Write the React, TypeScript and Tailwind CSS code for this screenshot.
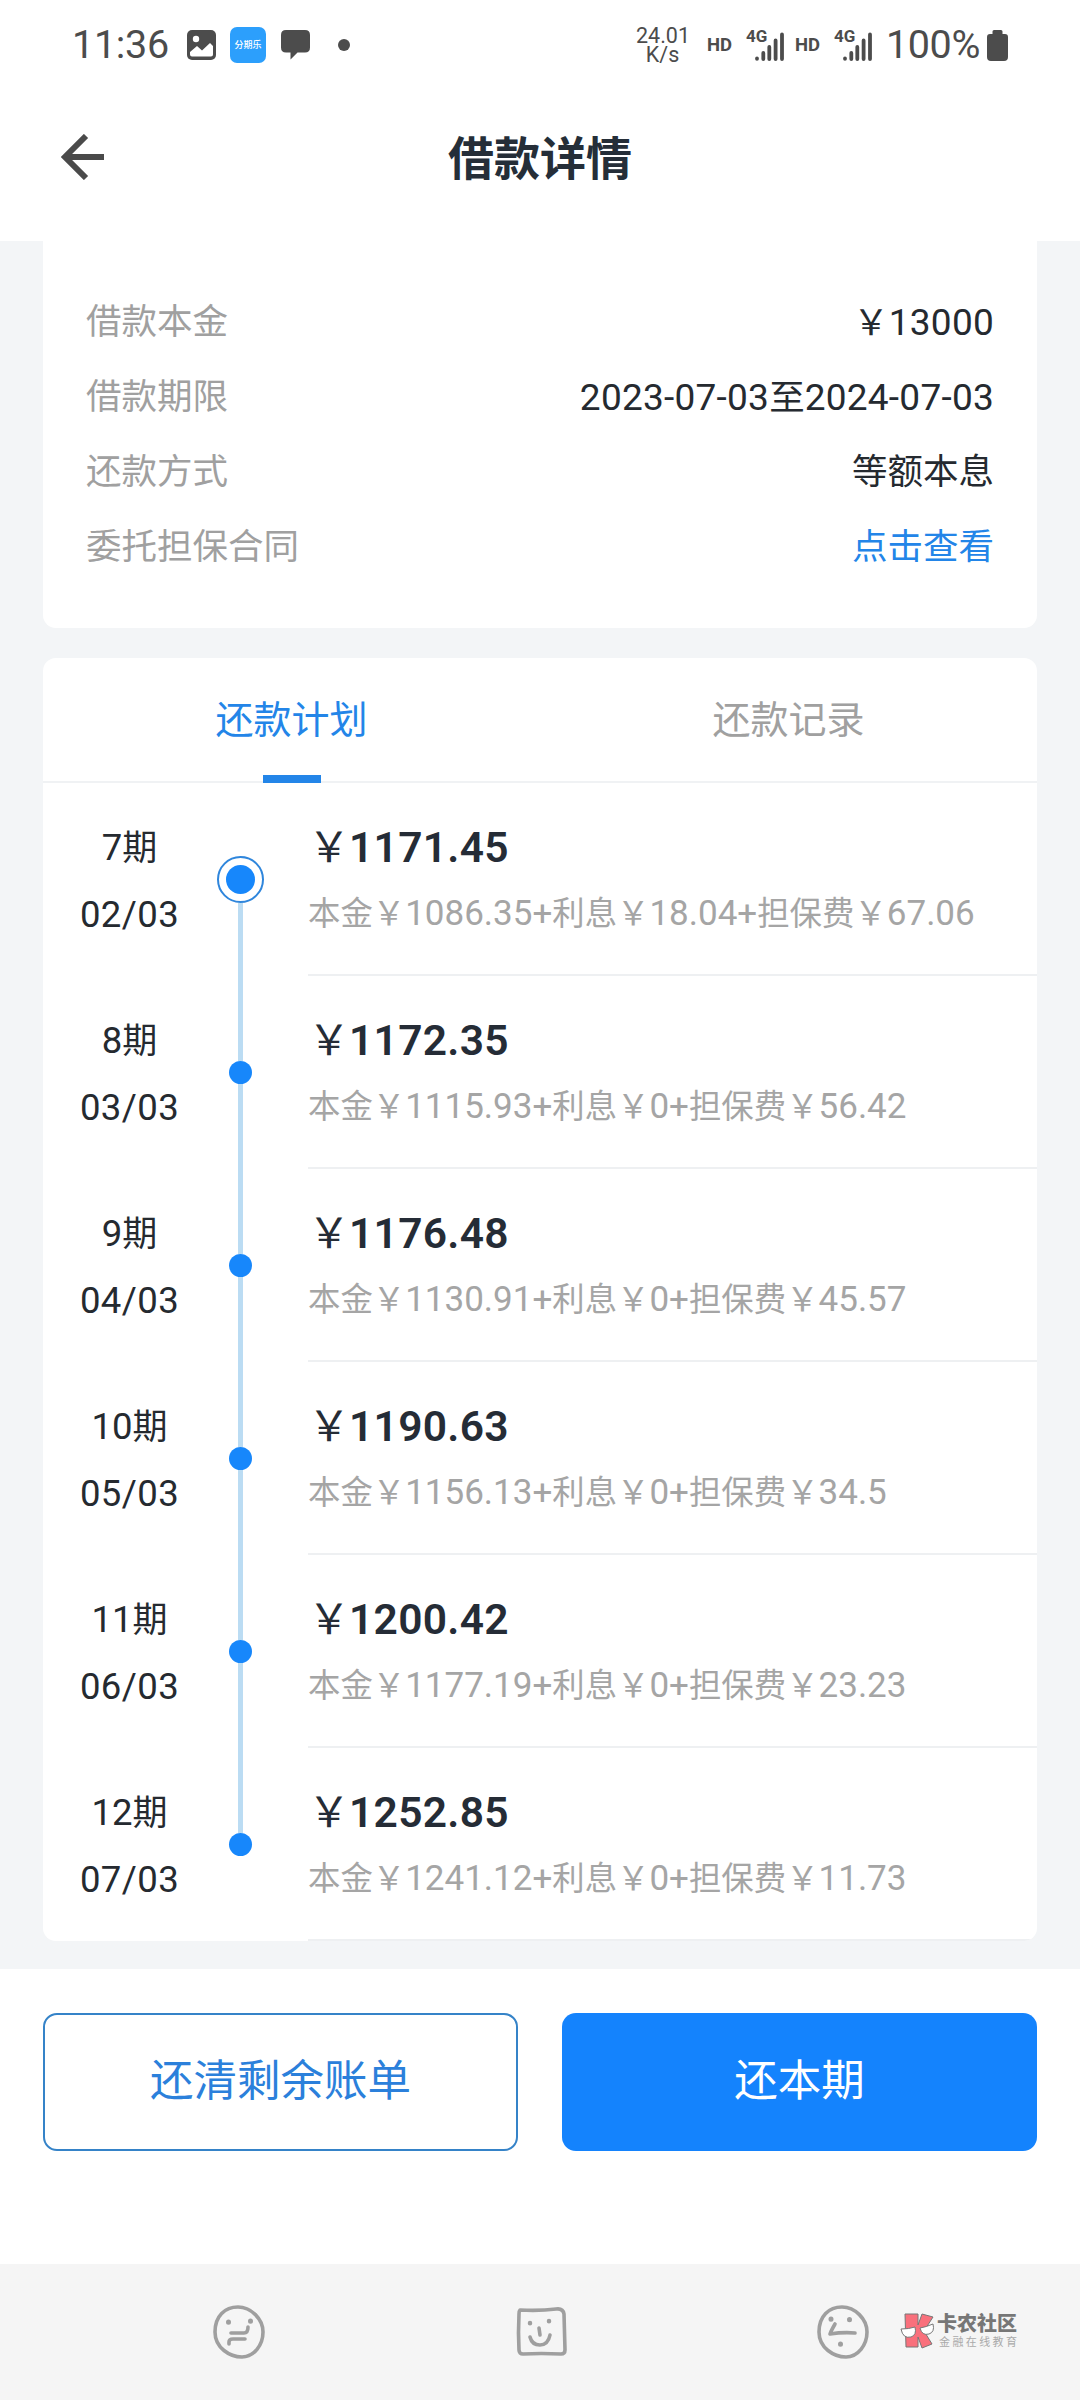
const details = [
  { label: "借款本金", value: "￥13000" },
  { label: "借款期限", value: "2023-07-03至2024-07-03" },
  { label: "还款方式", value: "等额本息" },
  { label: "委托担保合同", value: "点击查看", link: true },
];

const plan = [
  { period: "7期", date: "02/03", amount: "1171.45", parts: "本金￥1086.35+利息￥18.04+担保费￥67.06" },
  { period: "8期", date: "03/03", amount: "1172.35", parts: "本金￥1115.93+利息￥0+担保费￥56.42" },
  { period: "9期", date: "04/03", amount: "1176.48", parts: "本金￥1130.91+利息￥0+担保费￥45.57" },
  { period: "10期", date: "05/03", amount: "1190.63", parts: "本金￥1156.13+利息￥0+担保费￥34.5" },
  { period: "11期", date: "06/03", amount: "1200.42", parts: "本金￥1177.19+利息￥0+担保费￥23.23" },
  { period: "12期", date: "07/03", amount: "1252.85", parts: "本金￥1241.12+利息￥0+担保费￥11.73" },
];

// Digits are set slightly larger than the Chinese characters around them
function Mixed({ text, latin }: { text: string; latin: string }) {
  return (
    <>
      {text.split(/([0-9.+\-/]+)/).map((part, i) =>
        i % 2 ? <span key={i} className={latin}>{part}</span> : part
      )}
    </>
  );
}

function Signal() {
  return (
    <div className="relative h-[31px] w-[38px]">
      <span className="absolute top-0 left-0 text-[17px] leading-[12px] font-bold">4G</span>
      <svg className="absolute right-0 bottom-0" width="29" height="29" viewBox="0 0 29 29" fill="none" stroke="currentColor" strokeWidth="3.8" strokeLinecap="round">
        <path d="M2 26.5v.3M8.3 21v6M14.3 15v12M20.6 8.5V27M27 2.500V27" />
      </svg>
    </div>
  );
}

function StatusBar() {
  return (
    <div className="flex h-[90px] items-center justify-between pr-[72px] pl-[72px] text-[#4c4c4c]">
      <div className="flex items-center">
        <span className="w-[99px] text-[39.5px] leading-none tracking-[-0.3px]">11:36</span>
        <svg className="ml-[16px]" width="29" height="30" viewBox="0 0 29 30">
          <rect width="29" height="30" rx="5" fill="currentColor" />
          <circle cx="9" cy="9" r="3.2" fill="#fff" />
          <path d="M3 22l7-6 5 4.500 8-7.500 3 3v8.500q0 2-2 2H5q-2 0-2-2z" fill="#fff" />
        </svg>
        <div className="ml-[14px] flex h-9 w-9 items-center justify-center rounded-[7px] bg-[#2c9ffc] text-[9px] leading-none font-medium whitespace-nowrap text-white">分期乐</div>
        <svg className="ml-[15px]" width="29" height="30" viewBox="0 0 29 30" fill="currentColor">
          <path d="M5 0h19q5 0 5 5v12.500q0 5-5 5h-7.500L9.500 29.500v-7H5q-5 0-5-5V5q0-5 5-5z" />
        </svg>
        <span className="ml-[28px] h-3 w-3 rounded-full bg-[#4c4c4c]" />
      </div>
      <div className="flex items-center">
        <div className="mr-[18px] w-[53px] text-center text-[21.500px] leading-[19px]">
          <div>24.01</div>
          <div>K/s</div>
        </div>
        <span className="w-[27px] text-[18.500px] leading-none font-bold">HD</span>
        <div className="ml-[12px]"><Signal /></div>
        <span className="ml-[11px] w-[27px] text-[18.500px] leading-none font-bold">HD</span>
        <div className="ml-[12px]"><Signal /></div>
        <span className="ml-[14px] w-[96px] text-[39.500px] leading-none tracking-[-0.4px]">100%</span>
        <svg className="ml-[5px]" width="21" height="31" viewBox="0 0 21 31" fill="currentColor">
          <path d="M7 0h7q1.500 0 1.500 1.500V4H18q3 0 3 3v20q0 4-4 4H4q-4 0-4-4V7q0-3 3-3h2.500V1.500Q5.500 0 7 0z" />
        </svg>
      </div>
    </div>
  );
}

function Header() {
  return (
    <div className="grid h-[151px] grid-cols-3 items-start pt-[42px]">
      <svg className="mt-[2px] ml-[60px]" width="46" height="46" viewBox="0 0 46 46" fill="none" stroke="#4a4a4a" strokeWidth="6">
        <path d="M26 2L5 23l21 21M5 23h39" />
      </svg>
      <h1 className="text-center text-[46px] leading-[54px] font-bold text-[#252e38]">借款详情</h1>
    </div>
  );
}

function PlanRow({ item, index }: { item: (typeof plan)[number]; index: number }) {
  const first = index === 0;
  const last = index === plan.length - 1;
  return (
    <div className="flex h-[193px]">
      <div className="flex w-[173px] flex-col items-center pt-[38px] text-[35px] text-[#252a30]">
        <div className="leading-[54px]"><Mixed text={item.period} latin="text-[36.500px]" /></div>
        <div className="mt-[12px] text-[36.500px] leading-[54px] tracking-[0.4px]">{item.date}</div>
      </div>
      <div className="flex w-[48px] flex-col items-center">
        <div className={first ? "flex-1" : "w-[5px] flex-1 bg-[#bbdcf3]"} />
        {first ? (
          <div className="flex h-[47px] w-[47px] items-center justify-center rounded-full border-2 border-[#2f86dc]">
            <div className="h-[29px] w-[29px] rounded-full bg-[#1787fb]" />
          </div>
        ) : (
          <div className="h-[23px] w-[23px] rounded-full bg-[#1787fb]" />
        )}
        <div className={last ? "flex-1" : "w-[5px] flex-1 bg-[#bbdcf3]"} />
      </div>
      <div className="ml-[44px] flex-1 border-b-2 border-[#eef0f2] pt-[36px]">
        <div className="flex leading-[58px] text-[#252c36]">
          <span className="w-[41px] text-[42px]">￥</span>
          <span className="text-[42.500px] font-semibold tracking-[0.3px]">{item.amount}</span>
        </div>
        <div className="mt-[10px] text-[32.400px] leading-[54px] whitespace-nowrap text-[#a5a5a5]">
          <Mixed text={item.parts} latin="text-[35px]" />
        </div>
      </div>
    </div>
  );
}

function NavBar() {
  return (
    <div className="relative flex h-[136px] items-center justify-between bg-[#f5f5f5] pr-[210px] pl-[212px] text-[#9f9f9f]">
      <svg width="54" height="54" viewBox="0 0 54 54" fill="none" stroke="currentColor" strokeWidth="3.600" strokeLinecap="round" strokeLinejoin="round">
        <path d="M3 27C3 11 13 2 26 2s25 12 25 25-9 25-21 25S3 43 3 27z" />
        <path d="M19 28h13q4 0 4-6M17 39v-2q0-3 4-3h12" />
        <path d="M16.500 17v.2M38.500 16v.2" strokeWidth="5" />
      </svg>
      <svg width="54" height="54" viewBox="0 0 54 54" fill="none" stroke="currentColor" strokeWidth="3.600" strokeLinecap="round" strokeLinejoin="round">
        <path d="M6 5q20 1 36-1 7-1 8 5l1 36q0 4-4 4-20-1-38 0-4 0-4-4-1-17 0-36 0-3 1-4z" />
        <path d="M16 32q2 8 10 8t10-10M25 23l1 7" />
        <path d="M16 18v.2M35 16v.2" strokeWidth="4.500" />
      </svg>
      <svg width="54" height="54" viewBox="0 0 54 54" fill="none" stroke="currentColor" strokeWidth="3.600" strokeLinecap="round" strokeLinejoin="round">
        <path d="M3 27C3 11 13 2 26 2s25 12 25 25-9 25-21 25S3 43 3 27z" />
        <path d="M19 19q-4 7-5 10 13-2 25-1" />
        <path d="M15 14v.2M33.500 14.500v.2M24.500 39v.2" strokeWidth="5" />
      </svg>
      {/* Community watermark */}
      <div className="absolute top-[48px] left-[900px] flex">
        <svg width="35" height="38" viewBox="0 0 35 38" stroke="#777" strokeWidth="1">
          <path d="M5 2h13v11l4-11 11 3-9 14 8 13-10 4-4-11v10H6z" fill="#f9707c" />
          <path d="M1 17q8 0 14-2 2 8-4 10-8 2-10-8zM20 16q6-1 13-4 2 8-4 10-7 2-9-6z" fill="#fff" />
        </svg>
        <div className="ml-[2px] whitespace-nowrap">
          <div className="text-[20px] leading-[24px] font-black text-[#777]">卡农社区</div>
          <div className="ml-[2px] text-[11px] leading-[14px] tracking-[2.400px] text-[#aaa]">金融在线教育</div>
        </div>
      </div>
    </div>
  );
}

export default function App() {
  return (
    <div className="flex h-[2400px] w-[1080px] flex-col overflow-hidden bg-white font-[Roboto,'Noto_Sans_CJK_SC',sans-serif]">
      <StatusBar />
      <Header />
      <main className="h-[1728px] bg-[#f3f5f7] px-[43px]">
        <section className="h-[387px] rounded-b-[13px] bg-white px-[43px] pt-[44px]">
          {details.map((d) => (
            <div key={d.label} className="flex h-[75px] items-center justify-between text-[35.500px]">
              <span className="text-[#a0a0a0]">{d.label}</span>
              <span className={d.link ? "text-[#2385e8]" : "text-[#252a30]"}>
                <Mixed text={d.value} latin="text-[37px] tracking-[0.25px]" />
              </span>
            </div>
          ))}
        </section>
        <section className="mt-[30px] overflow-hidden rounded-[13px] bg-white">
          <div className="flex h-[125px] border-b-2 border-[#f0f2f4] pt-px text-[38px]">
            <div className="relative flex flex-1 items-center justify-center text-[#2385e8]">
              还款计划
              <span className="absolute -bottom-[2px] left-1/2 h-2 w-[58px] -translate-x-1/2 bg-[#2385e8]" />
            </div>
            <div className="flex flex-1 items-center justify-center text-[#a0a0a0]">还款记录</div>
          </div>
          {plan.map((item, i) => (
            <PlanRow key={item.period} item={item} index={i} />
          ))}
        </section>
      </main>
      <div className="grid h-[295px] grid-cols-2 items-start gap-[44px] px-[43px] pt-[44px] text-[43.500px]">
        <button className="h-[138px] rounded-[14px] border-2 border-[#3583c8] text-[#2b80db]">还清剩余账单</button>
        <button className="h-[138px] rounded-[14px] bg-[#1483fd] text-white">还本期</button>
      </div>
      <NavBar />
    </div>
  );
}
